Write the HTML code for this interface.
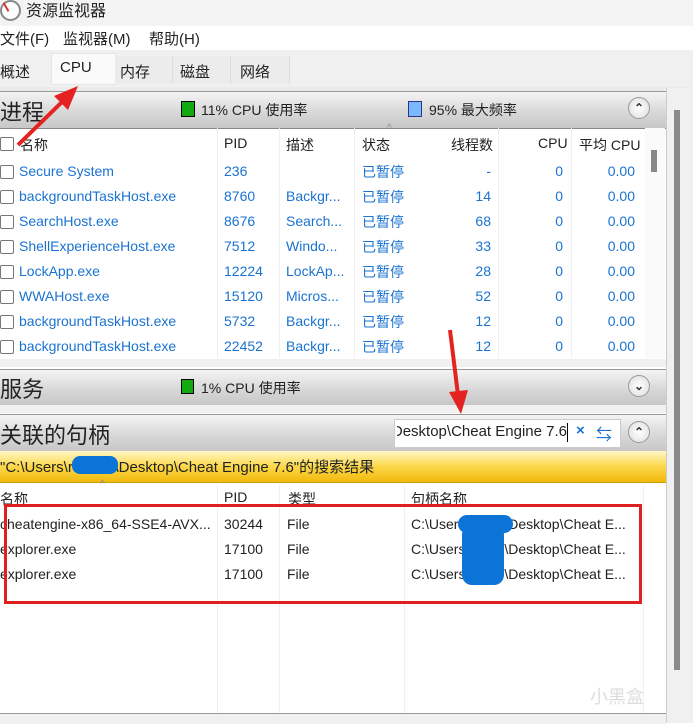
<!DOCTYPE html>
<html><head><meta charset="utf-8"><style>
body{margin:0;width:693px;height:723px;overflow:hidden;background:#fff;font-family:"Liberation Sans","Noto Sans CJK SC",sans-serif;font-size:14px;color:#222;position:relative}
.a{position:absolute;white-space:nowrap}
.hdr{position:absolute;left:0;width:666px;background:linear-gradient(#f4f4f4,#d6d6d6 60%,#c8c8c8);border-top:1px solid #999;border-bottom:1px solid #888}
.btn{position:absolute;width:20px;height:20px;border-radius:50%;border:1px solid #999;background:radial-gradient(#fff,#ddd);font-size:12px;text-align:center;line-height:20px;font-weight:bold;color:#333}
.blue{color:#1a73d1}
.cb{position:absolute;left:0;width:12px;height:12px;border:1px solid #777;border-radius:2px;background:#fff}
.vl{position:absolute;width:1px;background:#eef0f4}
</style></head><body>
<div class="a" style="left:0;top:0;width:693px;height:26px;background:#f3f3f3"></div>
<div class="a" style="left:0;top:0;width:17px;height:17px;border-radius:50%;border:2px solid #888;background:#fff"></div>
<div class="a" style="left:5px;top:2px;width:2px;height:10px;background:#d33;transform:rotate(-30deg)"></div>
<div class="a" style="left:26px;top:-3px;font-size:16px">资源监视器</div>
<div class="a" style="left:0;top:28px;font-size:15px">文件(F)</div>
<div class="a" style="left:63px;top:28px;font-size:15px">监视器(M)</div>
<div class="a" style="left:149px;top:28px;font-size:15px">帮助(H)</div>
<div class="a" style="left:0;top:50px;width:693px;height:37px;background:#f0f0f0"></div>
<div class="a" style="left:51px;top:53px;width:63px;height:30px;background:#fafafa;border:1px solid #e6e6e6"></div>
<div class="a" style="left:115px;top:56px;width:57px;height:28px;background:#ececec;border-right:1px solid #ddd"></div>
<div class="a" style="left:173px;top:56px;width:57px;height:28px;background:#ececec;border-right:1px solid #ddd"></div>
<div class="a" style="left:231px;top:56px;width:58px;height:28px;background:#ececec;border-right:1px solid #ddd"></div>
<div class="a" style="left:0;top:61px;font-size:15px">概述</div>
<div class="a" style="left:60px;top:59px;font-size:15px">CPU</div>
<div class="a" style="left:120px;top:61px;font-size:15px">内存</div>
<div class="a" style="left:180px;top:61px;font-size:15px">磁盘</div>
<div class="a" style="left:240px;top:61px;font-size:15px">网络</div>
<div class="a" style="left:0;top:87px;width:693px;height:4px;background:#ebebeb"></div>
<div class="a" style="left:666px;top:88px;width:27px;height:635px;background:#f0f0f0;border-left:1px solid #ccc"></div>
<div class="a" style="left:674px;top:110px;width:6px;height:560px;background:#8a8a8a"></div>
<div class="hdr" style="top:91px;height:36px"></div>
<div class="a" style="left:0;top:95px;font-size:22px">进程</div>
<div class="a" style="left:181px;top:101px;width:12px;height:14px;background:#1a1;border:1px solid #000"></div>
<div class="a" style="left:201px;top:100px;font-size:14px">11% CPU 使用率</div>
<div class="a" style="left:408px;top:101px;width:12px;height:14px;background:#7ab8ff;border:1px solid #338"></div>
<div class="a" style="left:429px;top:100px;font-size:14px">95% 最大频率</div>
<div class="btn" style="left:628px;top:97px">⌃</div>
<div class="vl" style="left:217px;top:128px;height:230px"></div>
<div class="vl" style="left:279px;top:128px;height:230px"></div>
<div class="vl" style="left:354px;top:128px;height:230px"></div>
<div class="vl" style="left:498px;top:128px;height:230px"></div>
<div class="vl" style="left:571px;top:128px;height:230px"></div>
<div class="cb" style="top:137px"></div>
<div class="a" style="left:20px;top:135px">名称</div>
<div class="a" style="left:224px;top:135px">PID</div>
<div class="a" style="left:286px;top:135px">描述</div>
<div class="a" style="left:362px;top:135px">状态</div>
<div class="a" style="left:387px;top:123px;font-size:10px;color:#888">^</div>
<div class="a" style="left:451px;top:135px">线程数</div>
<div class="a" style="left:538px;top:135px">CPU</div>
<div class="a" style="left:579px;top:135px">平均 CPU</div>
<div class="a" style="left:645px;top:128px;width:20px;height:230px;background:#fafafa"></div>
<div class="a" style="left:651px;top:150px;width:6px;height:22px;background:#888"></div>
<div id="rows"></div>
<div class="a" style="left:0;top:359px;width:666px;height:8px;background:#f0f0f0"></div>
<div class="hdr" style="top:369px;height:35px"></div>
<div class="a" style="left:0;top:372px;font-size:22px">服务</div>
<div class="a" style="left:181px;top:379px;width:11px;height:13px;background:#1a1;border:1px solid #000"></div>
<div class="a" style="left:201px;top:378px">1% CPU 使用率</div>
<div class="btn" style="left:628px;top:375px">⌄</div>
<div class="a" style="left:0;top:405px;width:666px;height:8px;background:#f0f0f0"></div>
<div class="hdr" style="top:414px;height:36px"></div>
<div class="a" style="left:0;top:418px;font-size:22px">关联的句柄</div>
<div class="a" style="left:394px;top:419px;width:225px;height:27px;background:#fff;border:1px solid #ccc"></div>
<div class="a" style="left:397px;top:423px;font-size:15px;width:170px;overflow:hidden;direction:rtl">Desktop\Cheat Engine 7.6</div>
<div class="a" style="left:567px;top:423px;width:1px;height:19px;background:#000"></div>
<div class="a" style="left:576px;top:422px;font-size:15px;color:#1a73d1;font-weight:bold">×</div>
<div class="a" style="left:596px;top:421px;font-size:16px;color:#1a73d1">⇆</div>
<div class="btn" style="left:628px;top:421px">⌃</div>
<div class="a" style="left:0;top:451px;width:666px;height:31px;background:linear-gradient(#fff7c8,#fbd84a 50%,#f2b90c);border-bottom:1px solid #c9a000"></div>
<div class="a" style="left:0;top:456px;font-size:15px">"C:\Users\r&nbsp;&nbsp;&nbsp;&nbsp;&nbsp;&nbsp;&nbsp;&nbsp;&nbsp;&nbsp;\Desktop\Cheat Engine 7.6"的搜索结果</div>
<div class="a" style="left:72px;top:456px;width:46px;height:18px;background:#0b74d6;border-radius:8px"></div>
<div class="vl" style="left:217px;top:484px;height:229px"></div>
<div class="vl" style="left:279px;top:484px;height:229px"></div>
<div class="vl" style="left:404px;top:484px;height:229px"></div>
<div class="vl" style="left:643px;top:484px;height:229px"></div>
<div class="a" style="left:100px;top:479px;font-size:10px;color:#888">^</div>
<div class="a" style="left:0;top:489px">名称</div>
<div class="a" style="left:224px;top:489px">PID</div>
<div class="a" style="left:288px;top:489px">类型</div>
<div class="a" style="left:411px;top:489px">句柄名称</div>
<div class="a" style="left:0;top:516px">cheatengine-x86_64-SSE4-AVX...</div>
<div class="a" style="left:0;top:541px">explorer.exe</div>
<div class="a" style="left:0;top:566px">explorer.exe</div>
<div class="a" style="left:224px;top:516px">30244</div>
<div class="a" style="left:224px;top:541px">17100</div>
<div class="a" style="left:224px;top:566px">17100</div>
<div class="a" style="left:287px;top:516px">File</div>
<div class="a" style="left:287px;top:541px">File</div>
<div class="a" style="left:287px;top:566px">File</div>
<div class="a" style="left:411px;top:516px">C:\Users\&nbsp;&nbsp;&nbsp;&nbsp;&nbsp;&nbsp;&nbsp;&nbsp;&nbsp;\Desktop\Cheat E...</div>
<div class="a" style="left:411px;top:541px">C:\Users\&nbsp;&nbsp;&nbsp;&nbsp;&nbsp;&nbsp;&nbsp;&nbsp;&nbsp;\Desktop\Cheat E...</div>
<div class="a" style="left:411px;top:566px">C:\Users\&nbsp;&nbsp;&nbsp;&nbsp;&nbsp;&nbsp;&nbsp;&nbsp;&nbsp;\Desktop\Cheat E...</div>
<div class="a" style="left:458px;top:515px;width:55px;height:18px;background:#0b74d6;border-radius:9px"></div>
<div class="a" style="left:462px;top:525px;width:42px;height:60px;background:#0b74d6;border-radius:10px"></div>
<div class="a" style="left:4px;top:504px;width:632px;height:94px;border:3px solid #e02020"></div>
<div class="a" style="left:0;top:713px;width:666px;height:10px;background:#f0f0f0;border-top:1px solid #999"></div>
<div class="a" style="left:590px;top:683px;font-size:18px;color:#ddd">小黑盒</div>
<svg class="a" style="left:0;top:0" width="693" height="723">
<g stroke="#e52222" stroke-width="4" fill="#e52222">
<line x1="18" y1="145" x2="64" y2="100"/>
<polygon points="78,86 54,96 68,110" stroke="none"/>
<line x1="450" y1="330" x2="458" y2="395"/>
<polygon points="461,414 449,392 468,390" stroke="none"/>
</g></svg>
<script>
var d=[["Secure System","236","","-"],["backgroundTaskHost.exe","8760","Backgr...","14"],["SearchHost.exe","8676","Search...","68"],["ShellExperienceHost.exe","7512","Windo...","33"],["LockApp.exe","12224","LockAp...","28"],["WWAHost.exe","15120","Micros...","52"],["backgroundTaskHost.exe","5732","Backgr...","12"],["backgroundTaskHost.exe","22452","Backgr...","12"]];
var h="";d.forEach(function(r,i){var t=163+i*25;
h+='<div class="cb" style="top:'+(t+2)+'px"></div><div class="a blue" style="left:19px;top:'+t+'px">'+r[0]+'</div><div class="a blue" style="left:224px;top:'+t+'px">'+r[1]+'</div><div class="a blue" style="left:286px;top:'+t+'px">'+r[2]+'</div><div class="a blue" style="left:362px;top:'+(t-1)+'px">已暂停</div><div class="a blue" style="right:202px;top:'+t+'px">'+r[3]+'</div><div class="a blue" style="right:130px;top:'+t+'px">0</div><div class="a blue" style="right:58px;top:'+t+'px">0.00</div>';});
document.getElementById("rows").innerHTML=h;
</script>
</body></html>
